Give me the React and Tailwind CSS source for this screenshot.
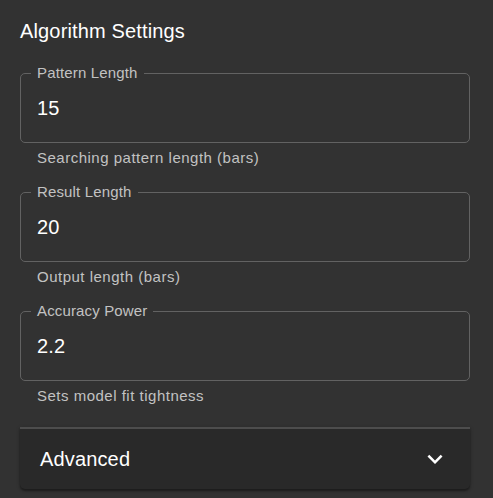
import React from "react";

const fields = [
  { label: "Pattern Length", value: "15", helper: "Searching pattern length (bars)" },
  { label: "Result Length", value: "20", helper: "Output length (bars)" },
  { label: "Accuracy Power", value: "2.2", helper: "Sets model fit tightness" },
];

function Field({ label, value, helper, first }) {
  return (
    <div className={first ? "mt-[26px]" : "mt-[25px]"}>
      <div className="relative h-[70px] rounded-[5px] border border-[#626262]">
        <span className="absolute left-[10px] top-[-10px] bg-[#323232] px-[6px] text-[15px] leading-[18px] tracking-[0.15px] text-[#c2c2c2]">
          {label}
        </span>
        <div className="pl-[16px] pt-[20px] text-[20px] leading-[29px] tracking-[0.2px] text-white">
          {value}
        </div>
      </div>
      <div className="mt-[6px] pl-[17px] text-[15px] leading-[18px] tracking-[0.5px] text-[#c2c2c2]">
        {helper}
      </div>
    </div>
  );
}

export default function App() {
  return (
    <div
      className="min-h-[498px] w-[493px] bg-[#323232] pl-5 pt-[15px]"
      style={{ fontFamily: '"Liberation Sans", Arial, sans-serif' }}
    >
      <div className="w-[450px]">
        <h2 className="text-[20px] leading-[32px] tracking-[0.15px] text-white">Algorithm Settings</h2>
        {fields.map((f, i) => (
          <Field key={f.label} {...f} first={i === 0} />
        ))}
        <div className="mt-[22px] rounded-b-[5px] border-t-2 border-[#4d4d4d] bg-[#292929] shadow-[0_2px_2px_rgba(0,0,0,0.35),0_1px_4px_rgba(0,0,0,0.2)]">
          <div className="flex h-[60px] items-center justify-between pl-[20px] pr-[20px]">
            <span className="text-[20px] leading-[29px] tracking-[0.15px] text-white">Advanced</span>
            <svg width="30" height="30" viewBox="0 0 24 24" fill="#ffffff">
              <path d="M16.59 8.59 12 13.17 7.41 8.59 6 10l6 6 6-6z" />
            </svg>
          </div>
        </div>
      </div>
    </div>
  );
}
